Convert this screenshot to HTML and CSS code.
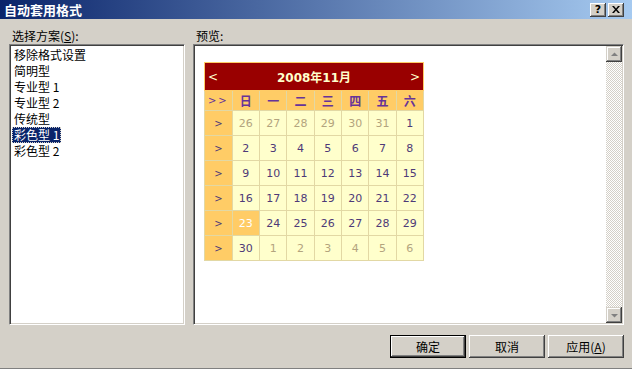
FILE: index.html
```html
<!DOCTYPE html>
<html lang="zh-CN">
<head>
  <meta charset="UTF-8">
  <title>自动套用格式</title>
  <link rel="stylesheet" href="styles.css">
</head>
<body>
  <div class="window">
    <div class="titlebar">
      <span class="title">自动套用格式</span>
      <div class="tb-btns">
        <span class="tb-btn help">?</span>
        <span class="tb-btn close">
          <svg width="8" height="7" viewBox="0 0 8 7"><path d="M0 0h2l2 2.5 2-2.5h2l-3 3.5 3 3.5h-2l-2-2.5-2 2.5h-2l3-3.5z" fill="#000"/></svg>
        </span>
      </div>
    </div>

    <div class="content">
      <div class="col col-left">
        <div class="label">选择方案(<u>S</u>):</div>
        <ul class="list sunken">
          <li><span>移除格式设置</span></li>
          <li><span>简明型</span></li>
          <li><span>专业型 1</span></li>
          <li><span>专业型 2</span></li>
          <li><span>传统型</span></li>
          <li class="selected"><span>彩色型 1</span></li>
          <li><span>彩色型 2</span></li>
        </ul>
      </div>

      <div class="col col-right">
        <div class="label">预览:</div>
        <div class="preview sunken">
          <div class="preview-area">
            <table class="cal">
              <tr>
                <td class="cal-title" colspan="8">
                  <div class="title-row">
                    <span class="nav">&lt;</span>
                    <span class="month">2008年11月</span>
                    <span class="nav">&gt;</span>
                  </div>
                </td>
              </tr>
              <tr class="day-names">
                <td class="sel">&gt;&gt;</td>
                <td>日</td><td>一</td><td>二</td><td>三</td><td>四</td><td>五</td><td>六</td>
              </tr>
              <tr>
                <td class="sel">&gt;</td>
                <td class="other">26</td><td class="other">27</td><td class="other">28</td><td class="other">29</td><td class="other">30</td><td class="other">31</td><td>1</td>
              </tr>
              <tr>
                <td class="sel">&gt;</td>
                <td>2</td><td>3</td><td>4</td><td>5</td><td>6</td><td>7</td><td>8</td>
              </tr>
              <tr>
                <td class="sel">&gt;</td>
                <td>9</td><td>10</td><td>11</td><td>12</td><td>13</td><td>14</td><td>15</td>
              </tr>
              <tr>
                <td class="sel">&gt;</td>
                <td>16</td><td>17</td><td>18</td><td>19</td><td>20</td><td>21</td><td>22</td>
              </tr>
              <tr>
                <td class="sel">&gt;</td>
                <td class="today">23</td><td>24</td><td>25</td><td>26</td><td>27</td><td>28</td><td>29</td>
              </tr>
              <tr>
                <td class="sel">&gt;</td>
                <td>30</td><td class="other">1</td><td class="other">2</td><td class="other">3</td><td class="other">4</td><td class="other">5</td><td class="other">6</td>
              </tr>
            </table>
          </div>
          <div class="scrollbar">
            <div class="sb-btn">
              <svg width="7" height="5" viewBox="0 0 7 5"><path d="M3.5 0.5 7 4H0z" fill="#808080"/></svg>
            </div>
            <div class="sb-track"></div>
            <div class="sb-btn">
              <svg width="7" height="5" viewBox="0 0 7 5"><path d="M0 1h7L3.5 4.5z" fill="#808080"/></svg>
            </div>
          </div>
        </div>
      </div>
    </div>

    <div class="buttons">
      <button class="btn default">确定</button>
      <button class="btn">取消</button>
      <button class="btn">应用(<u>A</u>)</button>
    </div>
  </div>
</body>
</html>
```

FILE: styles.css
```css
body {
  margin: 0;
  background-color: #d4d0c8;
  font-family: "Noto Sans CJK SC", "DejaVu Sans", sans-serif;
  font-size: 12px;
  color: #000000;
}

.window {
  width: 632px;
  height: 369px;
  box-sizing: border-box;
  border-bottom: 1px solid #808080;
  overflow: hidden;
}

.titlebar {
  height: 19px;
  display: flex;
  align-items: center;
  justify-content: space-between;
  padding: 0 8px 0 4px;
  background: linear-gradient(to right, #0a246a, #a6caf0);
  color: #ffffff;
}

.title {
  font-weight: bold;
  font-size: 13px;
  line-height: 19px;
}

.tb-btns {
  display: flex;
  gap: 2px;
}

.tb-btn {
  width: 16px;
  height: 14px;
  box-sizing: border-box;
  background-color: #d4d0c8;
  box-shadow: inset -1px -1px #404040, inset 1px 1px #ffffff, inset -2px -2px #808080;
  display: flex;
  align-items: center;
  justify-content: center;
  color: #000000;
  font-family: "DejaVu Sans", sans-serif;
  font-weight: bold;
  font-size: 11px;
  line-height: 14px;
}

.content {
  display: flex;
  gap: 8px;
  padding: 8px 8px 0 9px;
}

.col-left {
  width: 176px;
}

.col-right {
  width: 431px;
}

.label {
  height: 17px;
  line-height: 17px;
  padding-left: 3px;
}

.sunken {
  box-sizing: border-box;
  height: 281px;
  border: 1px solid;
  border-color: #808080 #ffffff #ffffff #808080;
  box-shadow: inset 1px 1px #404040, inset -1px -1px #d4d0c8;
  background-color: #ffffff;
}

.list {
  list-style: none;
  margin: 0;
  padding: 2px 2px 1px;
}

.list li {
  height: 16px;
  line-height: 16px;
}

.list li span {
  display: inline-block;
  padding: 0 2px;
}

.list li.selected span {
  background-color: #0a246a;
  color: #ffffff;
  outline: 1px dotted #d4d0c8;
  outline-offset: -1px;
}

.preview {
  display: flex;
  padding: 1px;
}

.preview-area {
  flex: 1;
  padding: 16px 0 0 9px;
}

.scrollbar {
  width: 16px;
  display: flex;
  flex-direction: column;
}

.sb-btn {
  width: 16px;
  height: 16px;
  box-sizing: border-box;
  background-color: #d4d0c8;
  box-shadow: inset -1px -1px #404040, inset 1px 1px #d4d0c8, inset -2px -2px #808080, inset 2px 2px #ffffff;
  display: flex;
  align-items: center;
  justify-content: center;
}

.sb-track {
  flex: 1;
  background-image: conic-gradient(#ffffff 25%, #d4d0c8 0 50%, #ffffff 0 75%, #d4d0c8 0);
  background-size: 2px 2px;
}

.cal {
  width: 220px;
  border-collapse: collapse;
  border: 1px solid #ffcc66;
  background-color: #ffffcc;
  color: #4e3a78;
  font-family: "DejaVu Sans", Verdana, sans-serif;
  font-size: 11px;
}

.cal td {
  border: 1px solid #e2d8a4;
  height: 24px;
  width: 27px;
  padding: 0;
  text-align: center;
}

.cal td.cal-title {
  height: 27px;
  background-color: #990000;
  border-color: #ffcc66;
  color: #ffffcc;
}

.title-row {
  display: flex;
  align-items: center;
  justify-content: space-between;
  padding: 0 3px;
}

.nav {
  font-size: 12px;
}

.month {
  font-family: "DejaVu Sans", "Noto Sans CJK SC", sans-serif;
  font-weight: bold;
  font-size: 12px;
}

.day-names td {
  height: 19px;
  background-color: #ffcc66;
  color: #663399;
  font-family: "Noto Sans CJK SC", sans-serif;
  font-weight: bold;
  font-size: 12px;
}

.day-names td.sel {
  font-family: "DejaVu Sans", sans-serif;
  font-weight: normal;
  font-size: 10px;
  letter-spacing: 2px;
}

.cal td.sel {
  background-color: #ffcc66;
  font-size: 10px;
}

.cal td.other {
  color: #b3a47e;
}

.cal td.today {
  background-color: #ffcc66;
  color: #ffffff;
}

.buttons {
  display: flex;
  justify-content: flex-end;
  gap: 3px;
  padding: 10px 8px 0 0;
}

.btn {
  width: 76px;
  height: 23px;
  box-sizing: border-box;
  border: none;
  background-color: #d4d0c8;
  box-shadow: inset -1px -1px #404040, inset 1px 1px #ffffff, inset -2px -2px #808080, inset 2px 2px #d4d0c8;
  font-family: "Noto Sans CJK SC", sans-serif;
  font-size: 12px;
  color: #000000;
  padding: 0;
}

.btn.default {
  border: 1px solid #000000;
}
```
